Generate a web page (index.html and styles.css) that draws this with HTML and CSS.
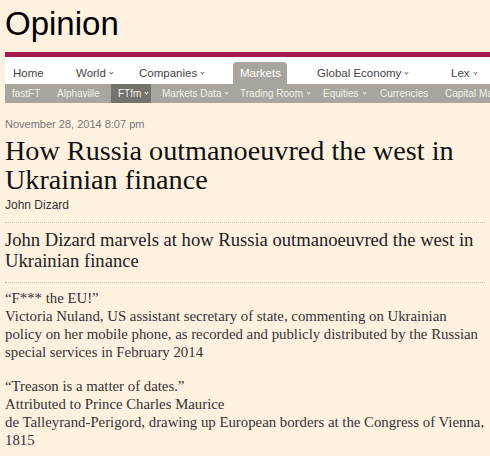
FILE: index.html
```html
<!DOCTYPE html>
<html lang="en">
<head>
<meta charset="utf-8">
<title>Opinion</title>
<link rel="stylesheet" href="styles.css">
</head>
<body>
<header class="masthead">
  <h1 class="section-title">Opinion</h1>
  <nav class="primary-nav">
    <a class="nav-item">Home</a>
    <a class="nav-item has-menu">World</a>
    <a class="nav-item has-menu">Companies</a>
    <a class="nav-item is-current">Markets</a>
    <a class="nav-item has-menu">Global Economy</a>
    <a class="nav-item has-menu">Lex</a>
  </nav>
  <nav class="sub-nav">
    <a class="sub-item">fastFT</a>
    <a class="sub-item">Alphaville</a>
    <a class="sub-item has-menu is-active">FTfm</a>
    <a class="sub-item has-menu">Markets Data</a>
    <a class="sub-item has-menu">Trading Room</a>
    <a class="sub-item has-menu">Equities</a>
    <a class="sub-item">Currencies</a>
    <a class="sub-item">Capital Markets</a>
  </nav>
</header>
<main class="article">
  <p class="dateline">November 28, 2014 8:07 pm</p>
  <h2 class="headline">How Russia outmanoeuvred the west in Ukrainian finance</h2>
  <p class="byline">John Dizard</p>
  <p class="standfirst">John Dizard marvels at how Russia outmanoeuvred the west in Ukrainian finance</p>
  <div class="body">
    <p>“F*** the EU!”<br>Victoria Nuland, US assistant secretary of state, commenting on Ukrainian<br>policy on her mobile phone, as recorded and publicly distributed by the Russian<br>special services in February 2014</p>
    <p>“Treason is a matter of dates.”<br>Attributed to Prince Charles Maurice<br>de Talleyrand-Perigord, drawing up European borders at the Congress of Vienna,<br>1815</p>
  </div>
</main>
</body>
</html>
```
FILE: styles.css
```css
html, body {
  margin: 0;
  padding: 0;
}
body {
  background: #fff1e0;
  font-family: "Liberation Sans", Arial, sans-serif;
  color: #333;
  overflow: hidden;
}
.section-title {
  margin: 0;
  padding: 5px 0 0 5px;
  font-family: "Liberation Sans", Arial, sans-serif;
  font-weight: normal;
  font-size: 33px;
  line-height: 38px;
  color: #000;
}
.primary-nav {
  margin: 9px 0 0 5px;
  border-top: 5px solid #a01a4c;
  background: #fff;
  height: 27px;
  display: grid;
  grid-template-columns: 64px 63px 101px 77px 134px 1fr;
  align-items: end;
  font-size: 11.5px;
}
.nav-item {
  justify-self: start;
  height: 22px;
  line-height: 22px;
  padding: 0 7px;
  color: #444;
  white-space: nowrap;
}
.nav-item:first-child {
  padding-left: 8px;
}
.is-current {
  padding: 0 7px;
  width: 40px;
  background: #a7a59d;
  color: #fff;
  border-radius: 4px 4px 0 0;
}
.has-menu::after {
  content: "";
  display: inline-block;
  width: 2px;
  height: 2px;
  margin: 0 0 3px 4px;
  border-right: 1px solid #777;
  border-bottom: 1px solid #777;
  transform: rotate(45deg);
  vertical-align: middle;
}
.sub-nav {
  margin-left: 5px;
  height: 19px;
  background: #a7a59d;
  display: grid;
  grid-template-columns: 45px 61px 40px 82px 83px 57px 65px 1fr;
  font-size: 10px;
  line-height: 19px;
  white-space: nowrap;
  overflow: hidden;
}
.sub-item {
  padding-left: 7px;
  color: #f4f1ea;
}
.sub-item.is-active {
  background: #74726d;
}
.sub-item.has-menu::after {
  border-color: #f4f1ea;
}
.sub-item:nth-child(4) {
  padding-left: 11px;
}
.article {
  padding: 0 5px;
}
.dateline {
  margin: 15px 0 0;
  font-size: 11px;
  line-height: 13px;
  color: #777;
}
.headline {
  margin: 5px 0 0;
  font-family: "Liberation Serif", "Times New Roman", serif;
  font-weight: normal;
  font-size: 28.2px;
  line-height: 29px;
  color: #111;
}
.byline {
  margin: 4px 0 0;
  font-size: 12px;
  line-height: 14px;
  color: #333;
  padding-bottom: 10px;
  border-bottom: 1px dotted #c8c2b8;
}
.standfirst {
  margin: 0;
  padding: 6px 0 11px;
  font-family: "Liberation Serif", "Times New Roman", serif;
  font-size: 18.6px;
  line-height: 21px;
  color: #222;
  border-bottom: 1px dotted #c8c2b8;
}
.body {
  padding-top: 6px;
  font-family: "Liberation Serif", "Times New Roman", serif;
  font-size: 14.8px;
  line-height: 18px;
  color: #333;
}
.body p {
  margin: 0 0 16px;
  white-space: nowrap;
}
```
